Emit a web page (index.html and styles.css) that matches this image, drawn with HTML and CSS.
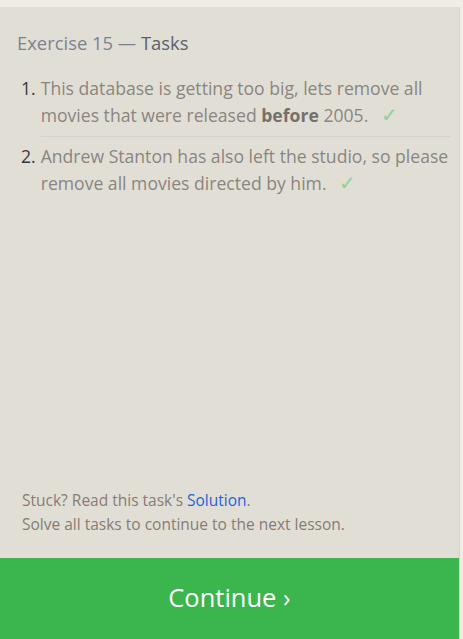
FILE: index.html
```html
<!DOCTYPE html>
<html>
<head>
<meta charset="utf-8">
<link rel="stylesheet" href="styles.css">
</head>
<body>
<div class="page">
  <div class="panel">
    <div class="content">
      <h2 class="title">Exercise 15 — <span class="strong">Tasks</span></h2>
      <ol class="tasks">
        <li class="task">
          <span class="num">1.</span>
          <span class="text">This database is getting too big, lets remove all movies that were released <b>before</b> 2005. <span class="check">✓</span></span>
        </li>
        <li class="task">
          <span class="num">2.</span>
          <span class="text">Andrew Stanton has also left the studio, so please remove all movies directed by him. <span class="check">✓</span></span>
        </li>
      </ol>
      <div class="spacer"></div>
      <div class="footer">
        <p>Stuck? Read this task's <a class="link" href="#">Solution</a>.</p>
        <p>Solve all tasks to continue to the next lesson.</p>
      </div>
    </div>
    <div class="continue">Continue ›</div>
  </div>
</div>
</body>
</html>
```
FILE: styles.css
```css
html, body {
  margin: 0;
  padding: 0;
  height: 100%;
}
body {
  background: #efede6;
  font-family: "Open Sans", "Noto Sans", sans-serif;
}
.page {
  height: 100%;
  padding: 7px 3px 0 0;
  box-sizing: border-box;
}
.panel {
  height: 100%;
  background: #e1dfd5;
  border-right: 1px solid #d6d4ca;
  display: flex;
  flex-direction: column;
}
.content {
  flex: 1;
  display: flex;
  flex-direction: column;
  padding: 0 9px 0 17px;
}
.title {
  margin: 24px 0 0;
  font-size: 18.4px;
  font-weight: normal;
  color: #7c8290;
  line-height: 24px;
}
.title .strong {
  color: #5a6070;
}
.tasks {
  list-style: none;
  margin: 20px 0 0;
  padding: 0 0 0 4px;
}
.task {
  display: flex;
  gap: 5px;
  font-size: 17.6px;
  line-height: 27px;
  color: #8a8581;
}
.num {
  color: #3a3634;
  flex: none;
}
.text {
  flex: 1;
  padding-bottom: 7px;
}
.task + .task .text {
  border-top: 1px solid #d5d3c9;
  padding-top: 6px;
}
.task + .task .num {
  padding-top: 7px;
}
.text b {
  color: #75706c;
}
.check {
  color: #8fd19a;
  font-size: 20px;
  line-height: 20px;
  margin-left: 8px;
}
.spacer {
  flex: 1;
}
.footer {
  padding: 0 0 22px 5px;
  font-size: 15.5px;
  line-height: 24px;
  color: #877b76;
}
.footer p {
  margin: 0;
}
.link {
  color: #1d62d8;
  text-decoration: none;
}
.continue {
  height: 81px;
  box-sizing: border-box;
  padding-bottom: 4px;
  background: #3bb54d;
  color: #ffffff;
  font-size: 25.5px;
  display: flex;
  align-items: center;
  justify-content: center;
}
```
